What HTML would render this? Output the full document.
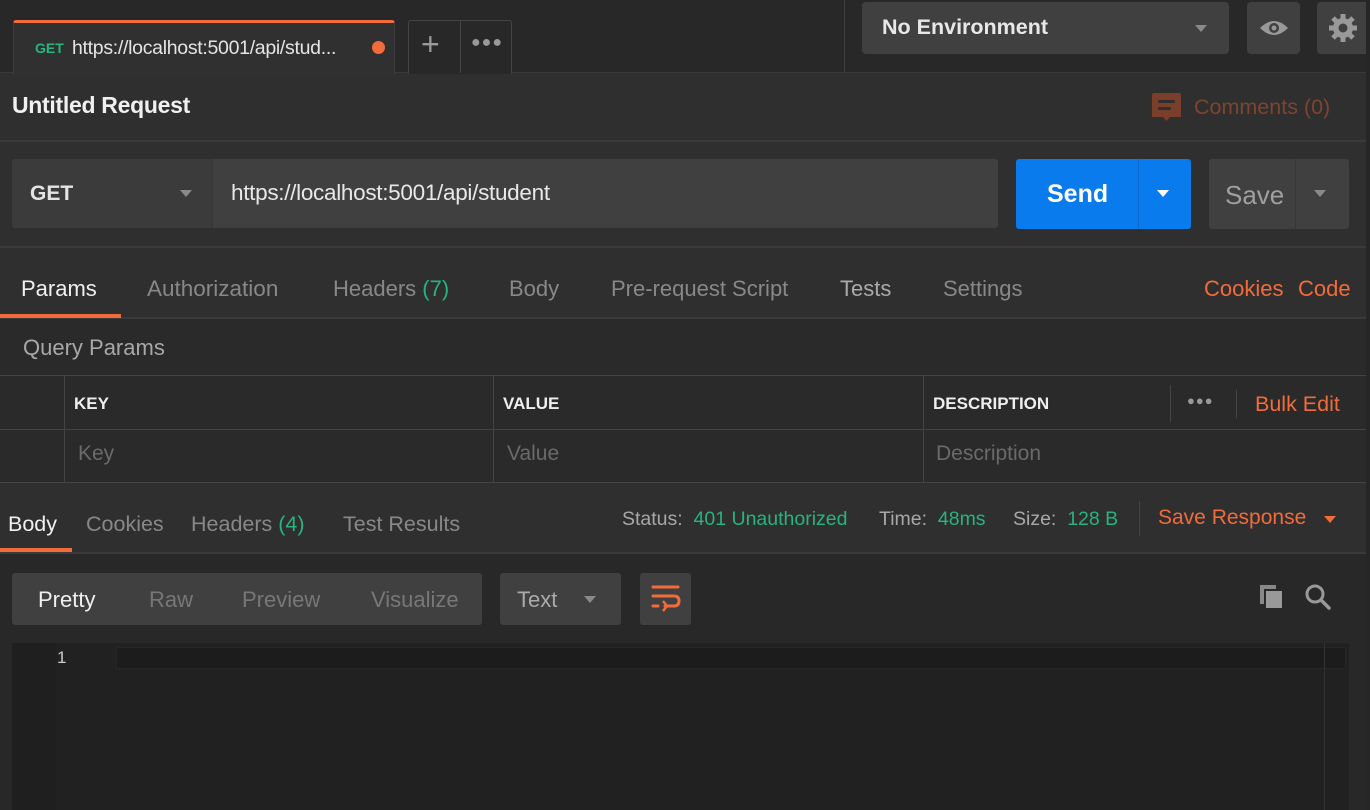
<!DOCTYPE html>
<html><head><meta charset="utf-8"><style>
*{box-sizing:border-box;margin:0;padding:0}
body{width:1370px;height:810px;overflow:hidden;background:#2f2f2f;font-family:"Liberation Sans",sans-serif;position:relative;color:#ddd}
.a{position:absolute}
.t{position:absolute;white-space:nowrap}
.tri{position:absolute;width:0;height:0;border-left:6px solid transparent;border-right:6px solid transparent;border-top:7px solid #8a8a8a}
</style></head><body>
<!-- top bar -->
<div class="a" style="left:0;top:0;width:1370px;height:73px;background:#282828;border-bottom:1px solid #3a3a3a"></div>
<div class="a" style="left:13px;top:20px;width:382px;height:54px;background:#303030;border:1px solid #3d3d3d;border-bottom:none;border-top:3px solid #f26b3a;border-radius:3px 3px 0 0"></div>
<div class="t" style="left:35px;top:40px;font-size:14px;font-weight:bold;color:#26b47f">GET</div>
<div class="t" style="left:72px;top:37px;font-size:19.5px;letter-spacing:-0.3px;color:#e4e4e4">https://localhost:5001/api/stud...</div>
<div class="a" style="left:372px;top:41px;width:13px;height:13px;border-radius:50%;background:#f26b3a"></div>
<div class="a" style="left:408px;top:20px;width:104px;height:54px;border:1px solid #444;border-bottom:none;border-radius:3px 3px 0 0;background:#282828"></div>
<div class="a" style="left:460px;top:21px;width:1px;height:52px;background:#444"></div>
<div class="t" style="left:421px;top:26px;font-size:32px;color:#999;font-weight:300">+</div>
<div class="t" style="left:471px;top:34px;font-size:16px;color:#999;letter-spacing:1px">●●●</div>
<div class="a" style="left:844px;top:0;width:1px;height:72px;background:#3d3d3d"></div>
<div class="a" style="left:862px;top:2px;width:367px;height:52px;background:#404040;border-radius:4px"></div>
<div class="t" style="left:882px;top:15px;font-size:21.5px;font-weight:bold;color:#e8e8e8">No Environment</div>
<div class="tri" style="left:1195px;top:25px"></div>
<div class="a" style="left:1247px;top:2px;width:53px;height:52px;background:#404040;border-radius:4px"></div>
<svg class="a" style="left:1258px;top:16px" width="32" height="24" viewBox="0 0 32 24"><path d="M2 12Q16 -2 30 12Q16 26 2 12Z" fill="#999"/><circle cx="16" cy="12" r="5" fill="#404040"/><circle cx="16" cy="12" r="2.5" fill="#999"/></svg>
<div class="a" style="left:1317px;top:2px;width:53px;height:52px;background:#404040;border-radius:4px"></div>
<svg class="a" style="left:1328px;top:13px" width="30" height="30" viewBox="0 0 30 30"><g fill="#999"><circle cx="15" cy="15" r="10"/><g stroke="#999" stroke-width="5"><line x1="15" y1="1" x2="15" y2="29"/><line x1="1" y1="15" x2="29" y2="15"/><line x1="5" y1="5" x2="25" y2="25"/><line x1="25" y1="5" x2="5" y2="25"/></g></g><circle cx="15" cy="15" r="4.5" fill="#404040"/></svg>
<!-- title -->
<div class="t" style="left:12px;top:92px;font-size:23px;font-weight:bold;letter-spacing:-0.3px;color:#f0f0f0">Untitled Request</div>
<svg class="a" style="left:1152px;top:93px" width="29" height="29" viewBox="0 0 29 29"><path d="M0 2Q0 0 2 0H27Q29 0 29 2V24H18L14.5 28L11 24H0Z" fill="#7a3f2b"/><rect x="6" y="7" width="17" height="3" rx="1.5" fill="#2f2f2f"/><rect x="6" y="14" width="13" height="3" rx="1.5" fill="#2f2f2f"/></svg>
<div class="t" style="left:1194px;top:95px;font-size:21.5px;color:#7d4530">Comments (0)</div>
<div class="a" style="left:0;top:140px;width:1366px;height:2px;background:#3a3a3a"></div>
<!-- url row -->
<div class="a" style="left:12px;top:159px;width:986px;height:69px;background:#404040;border-radius:3px"></div>
<div class="a" style="left:12px;top:159px;width:201px;height:69px;background:#3b3b3b;border-radius:3px 0 0 3px;border-right:1px solid #363636"></div>
<div class="t" style="left:30px;top:182px;font-size:21px;font-weight:bold;color:#e4e4e4">GET</div>
<div class="tri" style="left:180px;top:190px"></div>
<div class="t" style="left:231px;top:180px;font-size:22.5px;letter-spacing:-0.3px;color:#e8e8e8">https://localhost:5001/api/student</div>
<div class="a" style="left:1016px;top:159px;width:175px;height:70px;background:#097bed;border-radius:3px"></div>
<div class="a" style="left:1138px;top:159px;width:1px;height:70px;background:#0a6ad0"></div>
<div class="t" style="left:1047px;top:180px;font-size:25px;font-weight:bold;color:#fff">Send</div>
<div class="tri" style="left:1157px;top:190px;border-top-color:#fff"></div>
<div class="a" style="left:1209px;top:159px;width:140px;height:70px;background:#404040;border-radius:3px"></div>
<div class="a" style="left:1295px;top:159px;width:1px;height:70px;background:#363636"></div>
<div class="t" style="left:1225px;top:180px;font-size:26px;color:#a0a0a0">Save</div>
<div class="tri" style="left:1314px;top:190px"></div>
<div class="a" style="left:0;top:246px;width:1366px;height:2px;background:#3a3a3a"></div>
<!-- tabs -->
<div class="t" style="left:21px;top:276px;font-size:22px;color:#f0f0f0">Params</div>
<div class="t" style="left:147px;top:276px;font-size:22.5px;color:#888">Authorization</div>
<div class="t" style="left:333px;top:276px;font-size:22px;color:#888">Headers <span style="color:#26b47f">(7)</span></div>
<div class="t" style="left:509px;top:276px;font-size:22px;color:#888">Body</div>
<div class="t" style="left:611px;top:276px;font-size:22px;color:#888">Pre-request Script</div>
<div class="t" style="left:840px;top:276px;font-size:22px;color:#aaa">Tests</div>
<div class="t" style="left:943px;top:276px;font-size:22px;color:#888">Settings</div>
<div class="t" style="left:1204px;top:276px;font-size:22px;color:#f26b3a">Cookies</div>
<div class="t" style="left:1298px;top:276px;font-size:22px;color:#f26b3a">Code</div>
<div class="a" style="left:0;top:317px;width:1366px;height:2px;background:#3a3a3a"></div>
<div class="a" style="left:0;top:314px;width:121px;height:4px;background:#f26b3a"></div>
<!-- query params -->
<div class="a" style="left:0;top:319px;width:1366px;height:164px;background:#2a2a2a"></div>
<div class="t" style="left:23px;top:335px;font-size:22px;color:#a8a8a8">Query Params</div>
<div class="a" style="left:0;top:375px;width:1366px;height:1px;background:#444"></div>
<div class="a" style="left:0;top:429px;width:1366px;height:1px;background:#444"></div>
<div class="a" style="left:0;top:482px;width:1366px;height:1px;background:#444"></div>
<div class="a" style="left:64px;top:375px;width:1px;height:107px;background:#444"></div>
<div class="a" style="left:493px;top:375px;width:1px;height:107px;background:#444"></div>
<div class="a" style="left:923px;top:375px;width:1px;height:107px;background:#444"></div>
<div class="a" style="left:1170px;top:385px;width:1px;height:37px;background:#444"></div>
<div class="a" style="left:1236px;top:390px;width:1px;height:28px;background:#444"></div>
<div class="t" style="left:74px;top:394px;font-size:17px;font-weight:bold;color:#eee">KEY</div>
<div class="t" style="left:503px;top:394px;font-size:17px;font-weight:bold;color:#eee">VALUE</div>
<div class="t" style="left:933px;top:394px;font-size:17px;font-weight:bold;color:#eee">DESCRIPTION</div>
<div class="t" style="left:1187px;top:393px;font-size:13px;color:#999;letter-spacing:1px">●●●</div>
<div class="t" style="left:1255px;top:392px;font-size:21.5px;color:#f26b3a">Bulk Edit</div>
<div class="t" style="left:78px;top:442px;font-size:21px;color:#6a6a6a">Key</div>
<div class="t" style="left:507px;top:442px;font-size:21px;color:#6a6a6a">Value</div>
<div class="t" style="left:936px;top:442px;font-size:21px;color:#6a6a6a">Description</div>
<!-- response tabs -->
<div class="t" style="left:8px;top:512px;font-size:21.5px;color:#f0f0f0">Body</div>
<div class="t" style="left:86px;top:512px;font-size:21.5px;color:#888">Cookies</div>
<div class="t" style="left:191px;top:512px;font-size:21.5px;color:#888">Headers <span style="color:#26b47f">(4)</span></div>
<div class="t" style="left:343px;top:512px;font-size:21.5px;color:#888">Test Results</div>
<div class="t" style="left:622px;top:508px;font-size:19.5px;color:#a8a8a8">Status:&nbsp; <span style="color:#26b47f">401 Unauthorized</span></div>
<div class="t" style="left:879px;top:508px;font-size:19.5px;color:#a8a8a8">Time:&nbsp; <span style="color:#26b47f">48ms</span></div>
<div class="t" style="left:1013px;top:508px;font-size:19.5px;color:#a8a8a8">Size:&nbsp; <span style="color:#26b47f">128 B</span></div>
<div class="a" style="left:1139px;top:501px;width:1px;height:35px;background:#444"></div>
<div class="t" style="left:1158px;top:506px;font-size:21px;color:#f26b3a">Save Response</div>
<div class="tri" style="left:1324px;top:516px;border-top-color:#f26b3a"></div>
<div class="a" style="left:0;top:552px;width:1366px;height:2px;background:#3a3a3a"></div>
<div class="a" style="left:0;top:548px;width:72px;height:4px;background:#f26b3a"></div>
<!-- response body -->
<div class="a" style="left:0;top:554px;width:1366px;height:256px;background:#282828"></div>
<div class="a" style="left:1366px;top:0;width:4px;height:810px;background:#262626"></div>
<div class="a" style="left:12px;top:573px;width:470px;height:52px;background:#404040;border-radius:3px"></div>
<div class="t" style="left:38px;top:587px;font-size:22px;color:#f0f0f0">Pretty</div>
<div class="t" style="left:149px;top:587px;font-size:22px;color:#777">Raw</div>
<div class="t" style="left:242px;top:587px;font-size:22px;color:#777">Preview</div>
<div class="t" style="left:371px;top:587px;font-size:22px;color:#777">Visualize</div>
<div class="a" style="left:500px;top:573px;width:121px;height:52px;background:#404040;border-radius:3px"></div>
<div class="t" style="left:517px;top:587px;font-size:22px;color:#aaa">Text</div>
<div class="tri" style="left:584px;top:596px"></div>
<div class="a" style="left:640px;top:573px;width:51px;height:52px;background:#404040;border-radius:3px"></div>
<svg class="a" style="left:650px;top:584px" width="32" height="30" viewBox="0 0 32 30"><g fill="none" stroke="#f26b3a" stroke-width="3" stroke-linecap="round"><line x1="3" y1="3" x2="28" y2="3"/><path d="M3 12H24Q29 12 29 17Q29 22 24 22H15"/><line x1="3" y1="22" x2="8" y2="22"/></g><path d="M13 17L17 22L13 27" fill="none" stroke="#f26b3a" stroke-width="2.5"/></svg>
<svg class="a" style="left:1259px;top:584px" width="26" height="26" viewBox="0 0 26 26"><rect x="1" y="1" width="16" height="19" fill="#888"/><rect x="6" y="6" width="18" height="19" fill="#999" stroke="#282828" stroke-width="2"/></svg>
<svg class="a" style="left:1304px;top:583px" width="28" height="28" viewBox="0 0 28 28"><circle cx="11" cy="11" r="8" fill="none" stroke="#999" stroke-width="3"/><line x1="17" y1="17" x2="25" y2="25" stroke="#999" stroke-width="3.5" stroke-linecap="round"/></svg>
<div class="a" style="left:12px;top:643px;width:1337px;height:167px;background:#212121"></div>
<div class="a" style="left:12px;top:643px;width:44px;height:167px;background:#1f1f1f"></div>
<div class="a" style="left:116px;top:647px;width:1230px;height:22px;background:#1c1c1c;border:1px solid #262626"></div>
<div class="a" style="left:1324px;top:643px;width:1px;height:167px;background:#333"></div>
<div class="t" style="left:57px;top:648px;font-size:17px;color:#ccc">1</div>
</body></html>
